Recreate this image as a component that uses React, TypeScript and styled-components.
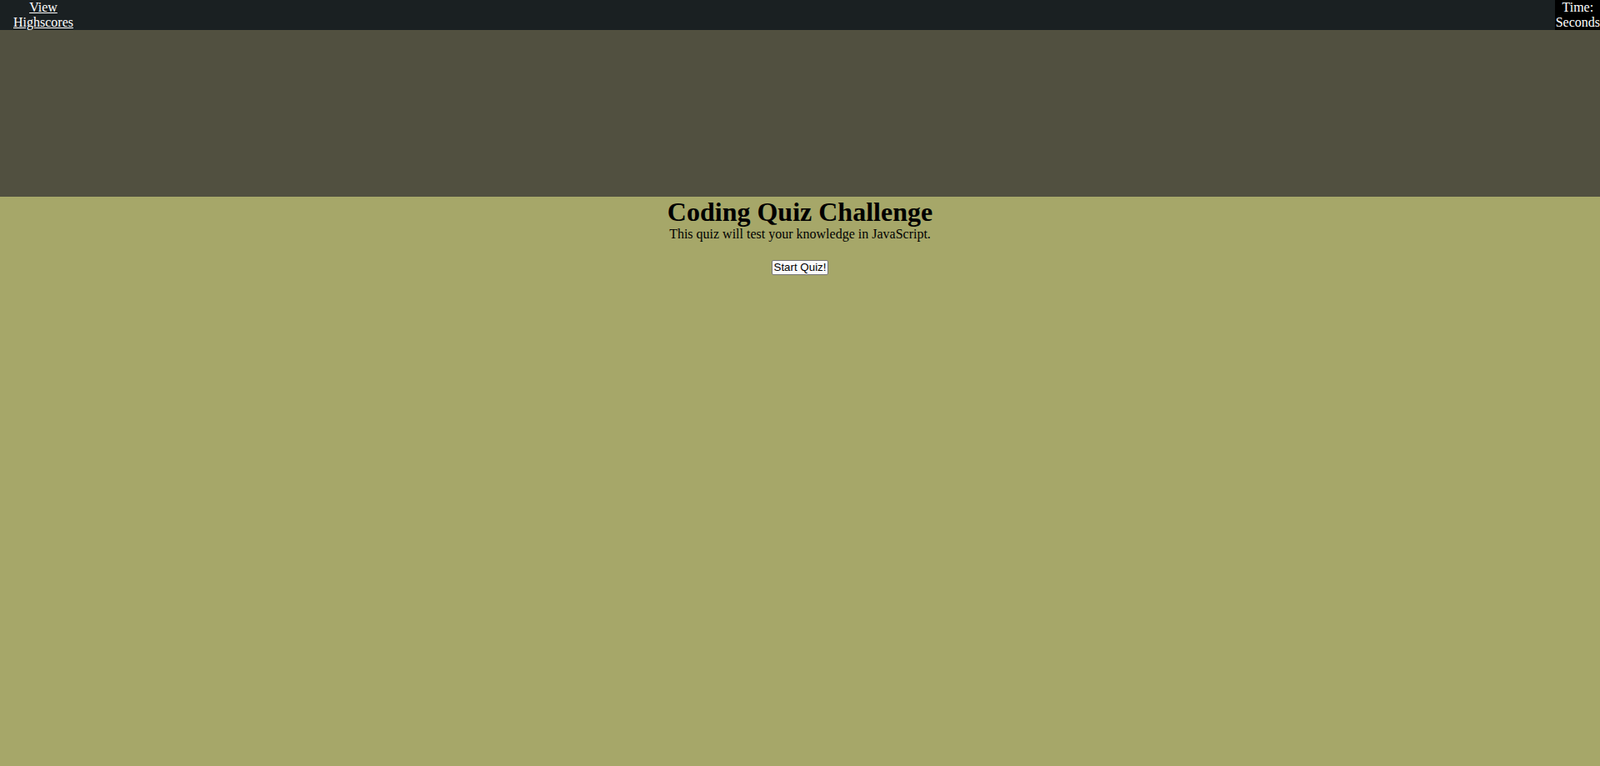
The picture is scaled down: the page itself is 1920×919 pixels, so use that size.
import React from "react";
import styled, { createGlobalStyle } from "styled-components";

const Global = createGlobalStyle`
  html, body { margin: 0; padding: 0; }
  body {
    background: #a6a769;
    font-family: "Liberation Serif", "Times New Roman", serif;
    font-size: 16px;
    color: #000;
    min-height: 919px;
  }
`;

const Header = styled.header`
  display: flex;
  justify-content: space-between;
  align-items: stretch;
  background: #1a2022;
  height: 36px;
  overflow: hidden;
`;

const NavLink = styled.a`
  display: block;
  color: #fff;
  text-align: center;
  width: 72px;
  margin-left: 16px;
  line-height: 17.5px;
  text-decoration: underline;
`;

const Timer = styled.div`
  background: #000;
  color: #fff;
  text-align: center;
  line-height: 17.5px;
  padding: 0 0 0 1px;
`;

const Band = styled.div`
  background: #515040;
  height: 200px;
`;

const Main = styled.main`
  text-align: center;
`;

const Title = styled.h1`
  margin: 0;
  font-size: 32px;
  font-weight: bold;
  line-height: 36px;
`;

const Intro = styled.p`
  margin: 0 0 21px;
  line-height: 18px;
`;

const StartButton = styled.button`
  font-family: "Liberation Sans", Arial, sans-serif;
  font-size: 13.33px;
  line-height: 16px;
  padding: 0 2px;
  border: 1px solid #767676;
  border-radius: 2px;
  background: #fafafa;
  color: #000;
  white-space: nowrap;
  height: 18px;
`;

export default function App() {
  return (
    <>
      <Global />
      <Header>
        <NavLink href="#">View Highscores</NavLink>
        <Timer>
          Time:
          <br />
          Seconds
        </Timer>
      </Header>
      <Band />
      <Main>
        <Title>Coding Quiz Challenge</Title>
        <Intro>This quiz will test your knowledge in JavaScript.</Intro>
        <StartButton>Start Quiz!</StartButton>
      </Main>
    </>
  );
}
